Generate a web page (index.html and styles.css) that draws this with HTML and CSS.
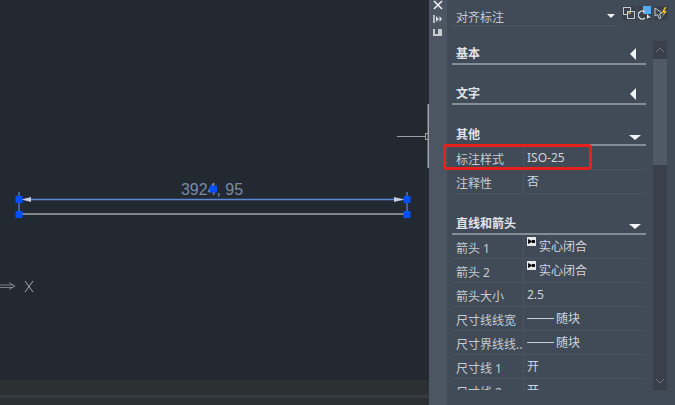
FILE: index.html
```html
<!DOCTYPE html>
<html lang="en">
<head>
    <meta charset="UTF-8">
    <meta name="viewport" content="width=device-width, initial-scale=1.0">
    <title>对齐标注</title>
    <link rel="stylesheet" href="styles.css">
</head>
<body>
    <div class="app">
        <div class="viewport">
            <svg class="drawing" width="429" height="380" viewBox="0 0 429 380">
                <!-- crosshair -->
                <path d="M397 136.500H425" stroke="#9a9ea2" fill="none"/>
                <rect x="425.500" y="133.500" width="3" height="6" stroke="#9a9ea2" fill="none"/>
                <path d="M428.300 104V168" stroke="#a2a6aa" stroke-width="1.500" fill="none"/>
                <!-- dimension -->
                <path d="M20 214H407" stroke="#a0a3a6" stroke-width="1.400" fill="none"/>
                <path d="M19 199.500H407" stroke="#5f86d6" stroke-width="1.600" fill="none"/>
                <path d="M19 192V214M407 192V214" stroke="#4d74c4" stroke-width="1.500" fill="none"/>
                <path d="M22 199.500L31 197V202Z" fill="#c5cddd"/>
                <path d="M404 199.500L394 197V202Z" fill="#c5cddd"/>
                <text class="dim-text" x="181" y="195" textLength="62" lengthAdjust="spacingAndGlyphs">3924, 95</text>
                <rect x="15.500" y="196" width="7" height="7" fill="#0050ff"/>
                <rect x="15.500" y="211" width="7" height="7" fill="#0050ff"/>
                <rect x="403.500" y="196" width="7" height="7" fill="#0050ff"/>
                <rect x="403.500" y="211" width="7" height="7" fill="#0050ff"/>
                <rect x="210" y="185.500" width="7" height="7" fill="#0050ff"/>
                <!-- ucs -->
                <path d="M0 285H13M0 287.500H13M9 282.500L15 286L9 289.500" stroke="#a4a7aa" stroke-width=".7" fill="none"/>
                <path d="M25 281L33 292M33 281L25 292" stroke="#b4b7ba" stroke-width=".9" fill="none"/>
            </svg>
            <div class="bottom-bar"><div class="bottom-stripe"></div></div>
        </div>

        <div class="strip">
            <svg width="18" height="40" viewBox="0 0 18 40">
                <path d="M5 1L13 9M13 1L5 9" stroke="#f2f4f6" stroke-width="1.500" fill="none"/>
                <path d="M5 15V23" stroke="#d8dcdf" stroke-width="1.500" fill="none"/>
                <path d="M7 16L10 19L7 22ZM13 19L10.500 16V22Z" fill="#d8dcdf"/>
                <rect x="4" y="29" width="9" height="7" fill="#c8ccd0"/>
                <rect x="6" y="29" width="3" height="5" fill="#4c5662"/>
            </svg>
        </div>

        <div class="panel">
            <div class="title-row">
                <div class="title-box">
                    <span class="title">对齐标注</span>
                    <span class="tri-down small"></span>
                </div>
                <div class="tool-btns">
                    <div class="tool-btn">
                        <svg width="14" height="14" viewBox="0 0 14 14">
                            <rect x="1.500" y="1.500" width="7" height="7" fill="none" stroke="#c8ccd0"/>
                            <rect x="5.500" y="5.500" width="7" height="7" fill="#3c4450" stroke="#c8ccd0"/>
                            <rect x="6.500" y="6" width="2" height="2" fill="#e0b050"/>
                        </svg>
                    </div>
                    <div class="tool-btn">
                        <svg width="14" height="14" viewBox="0 0 14 14">
                            <rect x="5" y="0" width="8" height="8" fill="#55a9f5"/>
                            <path d="M7 6A4 4 0 1 0 7 12" fill="none" stroke="#dfe2e4" stroke-width="1.200"/>
                            <path d="M9 8L9 13L10.500 11.500L13 12Z" fill="#f0f0f0"/>
                        </svg>
                    </div>
                    <div class="tool-btn">
                        <svg width="14" height="14" viewBox="0 0 14 14">
                            <path d="M1 2L8 7L5.500 8L7 12L5 12.500L3.500 8.500L1 10Z" fill="none" stroke="#c8ccd0"/>
                            <path d="M11 1L7.500 6.500H10L8 11L13 5H10.500L12.500 1Z" fill="#eec12f"/>
                        </svg>
                    </div>
                </div>
            </div>

            <div class="body">
                <div class="sections">
                    <div class="section-head first"><span>基本</span><span class="tri-left"></span></div>
                    <div class="section-head"><span>文字</span><span class="tri-left"></span></div>

                    <div class="section-head tall"><span>其他</span><span class="tri-down"></span></div>
                    <div class="row"><div class="key">标注样式</div><div class="val">ISO-25</div></div>
                    <div class="row"><div class="key">注释性</div><div class="val">否</div></div>

                    <div class="section-head tall"><span>直线和箭头</span><span class="tri-down"></span></div>
                    <div class="row"><div class="key">箭头 1</div><div class="val"><svg class="arrow-ico" width="9" height="9" viewBox="0 0 9 9"><rect width="9" height="9" fill="#e6e8ea"/><path d="M1 2L5 4V3H8V6H5V5L1 7Z" fill="#111"/></svg>实心闭合</div></div>
                    <div class="row"><div class="key">箭头 2</div><div class="val"><svg class="arrow-ico" width="9" height="9" viewBox="0 0 9 9"><rect width="9" height="9" fill="#e6e8ea"/><path d="M1 2L5 4V3H8V6H5V5L1 7Z" fill="#111"/></svg>实心闭合</div></div>
                    <div class="row"><div class="key">箭头大小</div><div class="val">2.5</div></div>
                    <div class="row"><div class="key">尺寸线线宽</div><div class="val"><span class="lw"></span>随块</div></div>
                    <div class="row"><div class="key">尺寸界线线...</div><div class="val"><span class="lw"></span>随块</div></div>
                    <div class="row"><div class="key">尺寸线 1</div><div class="val">开</div></div>
                    <div class="row"><div class="key">尺寸线 2</div><div class="val">开</div></div>
                </div>

                <div class="scrollbar">
                    <div class="scroll-btn">
                        <svg width="14" height="18" viewBox="0 0 14 18"><path d="M3 11L7 7L11 11" stroke="#6f7882" fill="none"/></svg>
                    </div>
                    <div class="scroll-thumb"></div>
                    <div class="scroll-track"></div>
                    <div class="scroll-btn">
                        <svg width="14" height="18" viewBox="0 0 14 18"><path d="M3 7L7 11L11 7" stroke="#6f7882" fill="none"/></svg>
                    </div>
                </div>
            </div>

            <div class="highlight"></div>
        </div>
    </div>
</body>
</html>
```

FILE: styles.css
```css
* {
    box-sizing: border-box;
}
html, body {
    margin: 0;
    height: 100%;
    overflow: hidden;
}
body {
    font-family: "Noto Sans", "Noto Sans CJK SC", sans-serif;
    font-size: 12px;
    color: #c8d0d8;
    background: #222931;
}
.app {
    display: flex;
    width: 675px;
    height: 405px;
}
.viewport {
    width: 429px;
    display: flex;
    flex-direction: column;
    background: #222931;
}
.drawing {
    display: block;
    flex: none;
}
.dim-text {
    font-family: "Liberation Sans", sans-serif;
    font-size: 17px;
    fill: #7c8aa8;
}
.bottom-bar {
    flex: 1;
    background: #2d3033;
    padding-top: 15px;
}
.bottom-stripe {
    height: 3px;
    background: #353b42;
}
.strip {
    width: 18px;
    background: #4c5662;
}
.strip svg {
    display: block;
}
.panel {
    position: relative;
    width: 228px;
    display: flex;
    flex-direction: column;
    background: #414a57;
}
.title-row {
    height: 26px;
    display: flex;
    padding: 6px 7px 0 6px;
}
.title-box {
    width: 165px;
    height: 20px;
    flex: none;
    display: flex;
    align-items: center;
    justify-content: space-between;
    padding: 0 3px;
    border-bottom: 1px solid #4c5561;
}
.title {
    color: #c4ccd4;
    line-height: 20px;
    margin-top: 5px;
}
.tool-btns {
    display: flex;
    gap: 2px;
    margin-left: 4px;
}
.tool-btn {
    width: 14px;
    height: 14px;
    background: #38404a;
}
.tool-btn svg {
    display: block;
}
.body {
    height: 364px;
    display: flex;
    align-items: flex-start;
    padding-left: 5px;
}
.sections {
    width: 194px;
    height: 364px;
    overflow: hidden;
}
.section-head {
    height: 40px;
    padding: 0 5px 0 4px;
    display: flex;
    align-items: flex-end;
    justify-content: space-between;
    border-bottom: 2px solid #848d95;
    font-weight: 700;
    color: #e0e4e8;
    line-height: 18px;
}
.section-head.first {
    height: 39px;
}
.section-head.tall {
    height: 41px;
}
.tri-left {
    width: 0;
    height: 0;
    margin: 0 5px 3px 0;
    border-top: 6px solid transparent;
    border-bottom: 6px solid transparent;
    border-right: 6px solid #f0f2f4;
}
.tri-down {
    width: 0;
    height: 0;
    margin-bottom: 4px;
    border-left: 6px solid transparent;
    border-right: 6px solid transparent;
    border-top: 5px solid #f0f2f4;
}
.tri-down.small {
    margin-bottom: 0;
    border-left-width: 4px;
    border-right-width: 4px;
    border-top-width: 4px;
}
.row {
    height: 24px;
    display: flex;
    border-bottom: 1px solid #4a535f;
}
.key {
    width: 72px;
    padding: 2px 0 0 4px;
    line-height: 23px;
    white-space: nowrap;
    overflow: hidden;
    color: #c4ccd4;
    border-right: 1px solid #4a535f;
}
.val {
    flex: 1;
    padding: 1px 0 0 3px;
    line-height: 22px;
    color: #d0d6dc;
    white-space: nowrap;
    display: flex;
    align-items: flex-start;
}
.arrow-ico {
    flex: none;
    margin: 1px 3px 0 0;
}
.lw {
    width: 27px;
    height: 1px;
    margin: 10px 2px 0 0;
    background: #c8d0d8;
}
.scrollbar {
    width: 14px;
    margin: 15px 0 0 7px;
    height: 349px;
    display: flex;
    flex-direction: column;
    background: #39404a;
}
.scroll-btn {
    height: 18px;
    flex: none;
    background: #39404a;
}
.scroll-btn svg {
    display: block;
}
.scroll-thumb {
    height: 106px;
    flex: none;
    background: #505a66;
}
.scroll-track {
    flex: 1;
}
.highlight {
    position: absolute;
    left: -4px;
    top: 144px;
    width: 149px;
    height: 26px;
    border: 3px solid #e6211a;
    border-radius: 4px;
}
```
